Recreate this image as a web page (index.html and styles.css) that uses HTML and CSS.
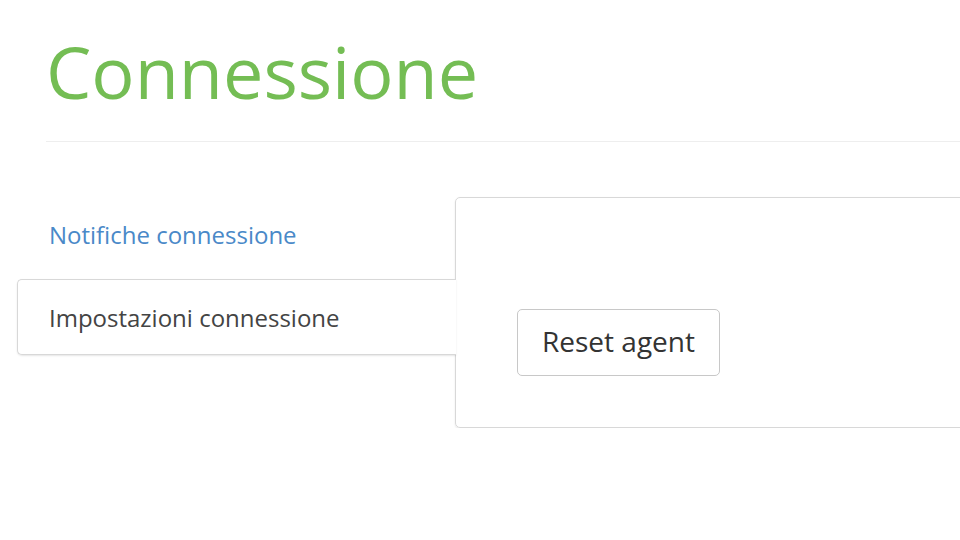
FILE: index.html
```html
<!DOCTYPE html>
<html lang="it">
<head>
<meta charset="utf-8">
<title>Connessione</title>
<link rel="stylesheet" href="styles.css">
</head>
<body>
<header class="header">
  <h1 class="title">Connessione</h1>
</header>
<div class="tabs">
  <nav class="tab-nav">
    <a class="tab-link" href="#">Notifiche connessione</a>
    <a class="tab-link active" href="#">Impostazioni connessione</a>
  </nav>
  <section class="tab-panel">
    <button class="btn" type="button">Reset agent</button>
  </section>
</div>
</body>
</html>
```

FILE: styles.css
```css
html, body {
  margin: 0;
  padding: 0;
  background: #fff;
  overflow: hidden;
  font-family: "Open Sans", "Noto Sans", sans-serif;
}

.header {
  margin-left: 46px;
  border-bottom: 1px solid #eeeeee;
  padding-bottom: 28px;
}

.title {
  margin: 29px 0 0;
  font-size: 72px;
  line-height: 84px;
  font-weight: 400;
  color: #74bd54;
}

.tabs {
  display: flex;
  margin-top: 55px;
  margin-left: 17px;
  width: 1100px;
}

.tab-nav {
  display: flex;
  flex-direction: column;
  width: 439px;
  flex: none;
  margin-right: -1px;
  position: relative;
  z-index: 1;
}

.tab-link {
  display: flex;
  align-items: center;
  padding-left: 32px;
  font-size: 24px;
  color: #4a89c8;
  text-decoration: none;
  height: 82px;
  padding-bottom: 7px;
  box-sizing: border-box;
}

.tab-link.active {
  height: 76px;
  padding-left: 31px;
  padding-bottom: 0;
  color: #444;
  background: #fff;
  border: 1px solid #d8d8d8;
  border-right: none;
  border-radius: 5px 0 0 5px;
  box-shadow: 0 1px 2px rgba(0, 0, 0, 0.1);
}

.tab-panel {
  flex: 1;
  height: 231px;
  box-sizing: border-box;
  border: 1px solid #d8d8d8;
  border-radius: 5px;
  box-shadow: 0 1px 2px rgba(0, 0, 0, 0.1);
  padding: 111px 0 0 61px;
}

.btn {
  font-family: inherit;
  font-size: 28px;
  color: #333;
  background: #fff;
  border: 1px solid #c8c8c8;
  border-radius: 5px;
  height: 67px;
  width: 203px;
  padding: 0 0 3px;
  cursor: pointer;
}
```
